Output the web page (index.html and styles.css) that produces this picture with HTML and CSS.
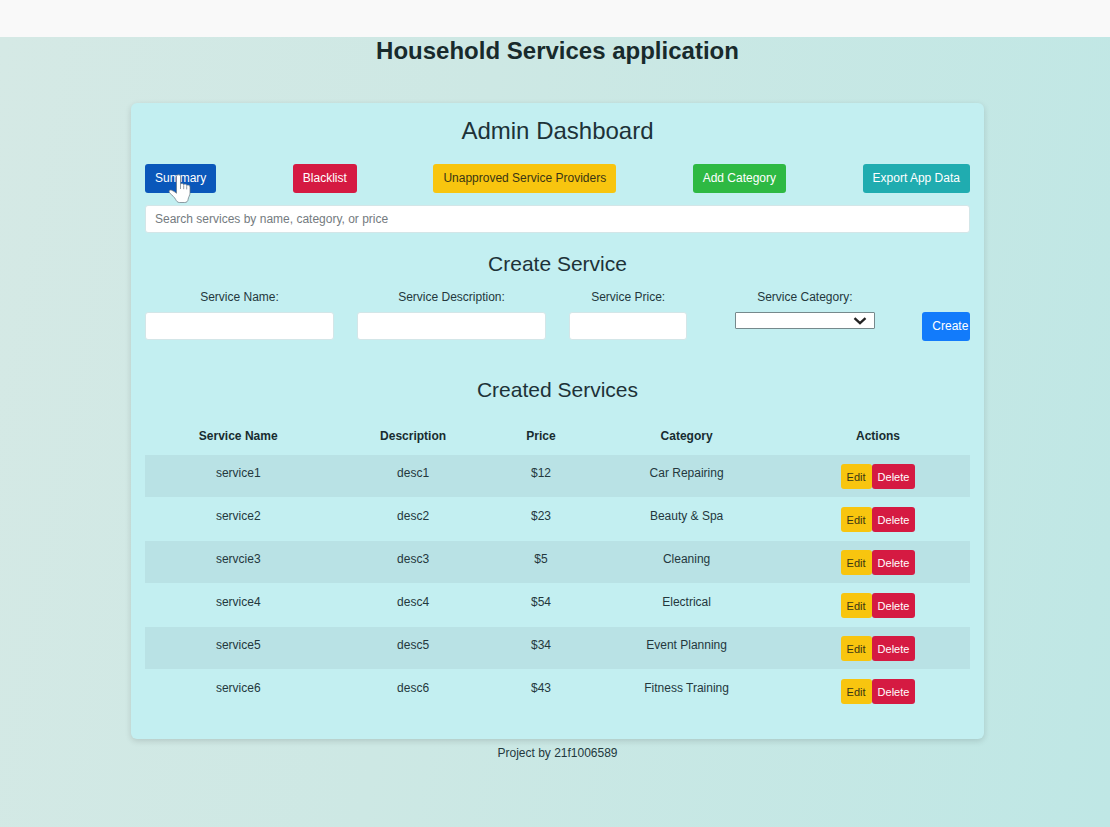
FILE: index.html
```html
<!DOCTYPE html>
<html lang="en">
<head>
<meta charset="utf-8">
<title>Household Services application</title>
<link rel="stylesheet" href="styles.css">
</head>
<body>
<div class="topbar"></div>
<div class="page">
  <h1 class="app-title">Household Services application</h1>
  <main class="panel">
    <h2 class="panel-title">Admin Dashboard</h2>
    <div class="toolbar">
      <div class="hovered">
        <button class="btn btn-primary-active" type="button">Summary</button>
        <svg class="pointer" viewBox="0 0 24 30" aria-hidden="true">
          <path d="M8.500 2.500c0-2.400 4-2.400 4 0v8c.4-1.500 3-1.300 3.200.3.700-1.200 2.900-.8 3 .8.900-1 3.300-.4 3.300 1.300v6.200c0 2.200-1.700 4.200-1.900 6.200-.2 2.200-1.600 3.200-3.400 3.200h-5.300c-1.900 0-2.900-1.400-3.700-3-1.300-2.400-3.400-4-5.400-5.900-2.300-2.200-.9-4.300 1.500-3.300 1.900.8 3.300 1.800 4.700 3z" fill="#fff" stroke="#66737d" stroke-width=".7"/>
          <path d="M12.500 10.500v4.500M15.700 11.300v3.900M18.700 12.200v3.200" fill="none" stroke="#7b868e" stroke-width=".8"/>
        </svg>
      </div>
      <button class="btn btn-danger" type="button">Blacklist</button>
      <button class="btn btn-warning" type="button">Unapproved Service Providers</button>
      <button class="btn btn-success" type="button">Add Category</button>
      <button class="btn btn-info" type="button">Export App Data</button>
    </div>
    <input class="control" type="search" aria-label="Search services" placeholder="Search services by name, category, or price">

    <h3 class="section-title">Create Service</h3>
    <form class="create-form">
      <div class="field wide">
        <label for="name">Service Name:</label>
        <input class="control" id="name" type="text">
      </div>
      <div class="field wide">
        <label for="description">Service Description:</label>
        <input class="control" id="description" type="text">
      </div>
      <div class="field medium">
        <label for="price">Service Price:</label>
        <input class="control" id="price" type="text">
      </div>
      <div class="field wide">
        <label for="category">Service Category:</label>
        <div class="select-wrap">
          <select class="select" id="category">
            <option></option>
            <option>Car Repairing</option>
            <option>Beauty &amp; Spa</option>
            <option>Cleaning</option>
            <option>Electrical</option>
            <option>Event Planning</option>
            <option>Fitness Training</option>
          </select>
          <svg class="chevron" viewBox="0 0 14 8" aria-hidden="true"><path d="M1.500 1.200l5.500 5 5.500-5" fill="none" stroke="#222" stroke-width="2.300"/></svg>
        </div>
      </div>
      <button class="btn btn-primary" type="submit">Create</button>
    </form>

    <h3 class="section-title created">Created Services</h3>
    <table class="services">
      <colgroup><col class="c-name"><col class="c-desc"><col class="c-price"><col class="c-cat"><col></colgroup>
      <thead>
        <tr><th>Service Name</th><th>Description</th><th>Price</th><th>Category</th><th>Actions</th></tr>
      </thead>
      <tbody>
        <tr><td>service1</td><td>desc1</td><td>$12</td><td>Car Repairing</td><td><div class="actions"><button class="btn-sm btn-warning" type="button">Edit</button><button class="btn-sm btn-danger" type="button">Delete</button></div></td></tr>
        <tr><td>service2</td><td>desc2</td><td>$23</td><td>Beauty &amp; Spa</td><td><div class="actions"><button class="btn-sm btn-warning" type="button">Edit</button><button class="btn-sm btn-danger" type="button">Delete</button></div></td></tr>
        <tr><td>servcie3</td><td>desc3</td><td>$5</td><td>Cleaning</td><td><div class="actions"><button class="btn-sm btn-warning" type="button">Edit</button><button class="btn-sm btn-danger" type="button">Delete</button></div></td></tr>
        <tr><td>service4</td><td>desc4</td><td>$54</td><td>Electrical</td><td><div class="actions"><button class="btn-sm btn-warning" type="button">Edit</button><button class="btn-sm btn-danger" type="button">Delete</button></div></td></tr>
        <tr><td>service5</td><td>desc5</td><td>$34</td><td>Event Planning</td><td><div class="actions"><button class="btn-sm btn-warning" type="button">Edit</button><button class="btn-sm btn-danger" type="button">Delete</button></div></td></tr>
        <tr><td>service6</td><td>desc6</td><td>$43</td><td>Fitness Training</td><td><div class="actions"><button class="btn-sm btn-warning" type="button">Edit</button><button class="btn-sm btn-danger" type="button">Delete</button></div></td></tr>
      </tbody>
    </table>
  </main>
  <footer class="footer">Project by 21f1006589</footer>
</div>
</body>
</html>
```
FILE: styles.css
```css
* {
  box-sizing: border-box;
}

body {
  margin: 0;
  min-height: 100vh;
  display: flex;
  flex-direction: column;
  font-family: "Liberation Sans", Arial, sans-serif;
  font-size: 12px;
  line-height: 18px;
  color: #24383d;
  text-align: center;
}

button,
input,
select {
  font: inherit;
}

.topbar {
  height: 37px;
  background: #f9f9f9;
}

.page {
  flex: 1;
  padding-left: 5px;
  background: linear-gradient(100deg, #d5e9e5 0%, #cde8e4 40%, #bfe7e5 100%);
}

.app-title {
  margin: 0 0 38px;
  font-size: 24px;
  line-height: 28px;
  color: #182a2c;
}

.panel {
  max-width: 853px;
  margin: 0 auto;
  padding: 13px 14px 26px;
  border-radius: 6px;
  background: #c3eff1;
  box-shadow: 0 2px 6px rgba(0, 0, 0, 0.14);
}

.panel-title {
  margin: 0 0 19px;
  font-size: 24px;
  line-height: 29px;
  font-weight: 400;
  color: #1d3238;
}

.toolbar {
  display: flex;
  justify-content: space-between;
  margin-bottom: 12px;
}

.hovered {
  position: relative;
}

.pointer {
  position: absolute;
  left: 23px;
  top: 10px;
  width: 24px;
  height: 30px;
}

.btn {
  display: block;
  height: 29px;
  padding: 0 10px 2px;
  border: 0;
  border-radius: 3px;
  color: #fff;
  white-space: nowrap;
}

.btn-sm {
  height: 25px;
  padding: 0 6px;
  border: 0;
  border-radius: 3px;
  font-size: 11px;
  color: #fff;
}

.btn-primary {
  background: #127bfb;
}

.btn-primary-active {
  background: #0a57ba;
}

.btn-danger {
  background: #d51a42;
}

.btn-warning {
  background: #f8c50f;
  color: #3a3514;
}

.btn-success {
  background: #2eb943;
}

.btn-info {
  background: #20acb0;
}

.control {
  display: block;
  width: 100%;
  height: 28px;
  padding: 0 9px;
  border: 1px solid #d3e6e8;
  border-radius: 3px;
  background: #fff;
}

.control::placeholder {
  color: #747b80;
  opacity: 1;
}

.section-title {
  margin: 18px 0 12px;
  font-size: 21px;
  line-height: 25px;
  font-weight: 400;
  color: #1d3238;
}

.create-form {
  display: grid;
  grid-template-columns: repeat(12, minmax(0, 1fr));
  column-gap: 23px;
  align-items: start;
}

.create-form .btn {
  margin-top: 24px;
}

.wide {
  grid-column: span 3;
}

.medium {
  grid-column: span 2;
}

.field label {
  display: block;
  margin-bottom: 6px;
}

.select-wrap {
  position: relative;
  width: 140px;
  margin: 0 auto;
}

.select {
  display: block;
  width: 100%;
  height: 17px;
  padding: 0 20px 0 4px;
  border: 1px solid #76898c;
  border-radius: 1px;
  background: #fff;
  appearance: none;
}

.chevron {
  position: absolute;
  right: 8px;
  top: 5px;
  width: 14px;
  height: 8px;
  pointer-events: none;
}

.created {
  margin: 36px 0 16px;
}

.services {
  width: 100%;
  border-collapse: collapse;
  table-layout: fixed;
}

.c-name {
  width: 22.6%;
}

.c-desc {
  width: 19.8%;
}

.c-price {
  width: 11.2%;
}

.c-cat {
  width: 24.1%;
}

.services th {
  padding: 9px 0 10px;
  color: #182c30;
}

.services td {
  padding: 9px 0 8px;
  vertical-align: top;
}

.services tbody tr {
  border-bottom: 1px solid #c3eff1;
}

.services tbody tr:nth-child(odd) {
  background: #b9e2e5;
}

.actions {
  display: flex;
  justify-content: center;
}

.footer {
  padding-top: 5px;
}
```
